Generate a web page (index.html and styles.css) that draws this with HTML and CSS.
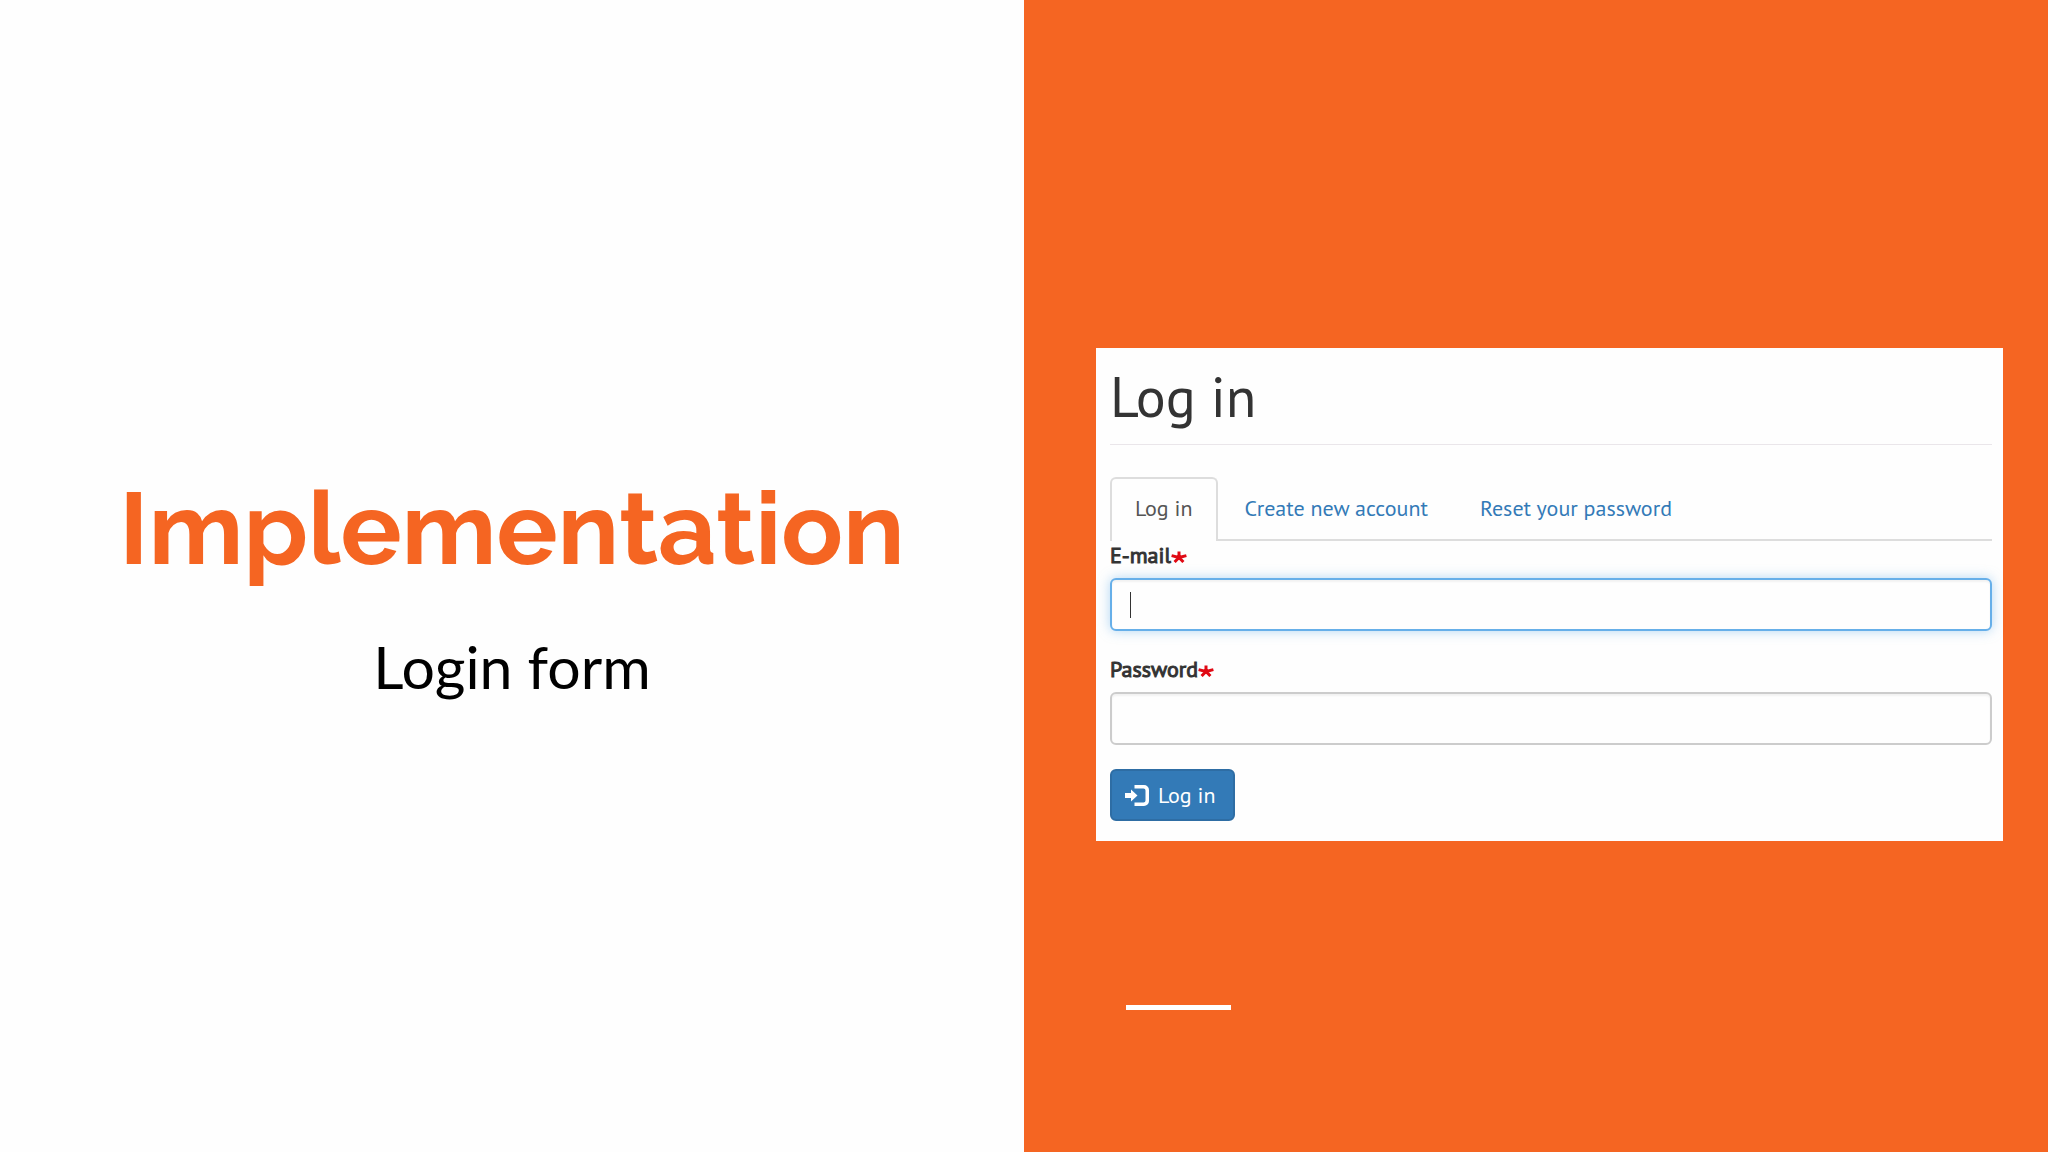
FILE: index.html
```html
<!DOCTYPE html>
<html lang="en">
  <head>
    <meta charset="utf-8" />
    <title>Implementation - Login form</title>
    <link rel="stylesheet" href="styles.css">
  </head>
  <body>
    <main class="slide">
      <section class="intro">
        <h1 class="title">Implementation</h1>
        <p class="subtitle">Login form</p>
      </section>

      <section class="demo">
        <div class="panel">
          <h2 class="page-header">Log in</h2>

          <nav class="tabs">
            <a class="tab active" href="#login">Log in</a>
            <a class="tab" href="#register">Create new account</a>
            <a class="tab" href="#reset">Reset your password</a>
          </nav>

          <form id="login">
            <div class="form-item">
              <label for="email">E-mail<svg class="required" viewBox="0 0 16 12" aria-hidden="true"><path d="M8 6.500V0.500M8 6.500L.6 4.600M8 6.500L15.400 4.600M8 6.500L3.600 11M8 6.500L12.400 11" /></svg></label>
              <div class="field">
                <input class="form-control focused" type="email" id="email" required />
                <span class="caret"></span>
              </div>
            </div>

            <div class="form-item">
              <label for="password">Password<svg class="required" viewBox="0 0 16 12" aria-hidden="true"><path d="M8 6.500V0.500M8 6.500L.6 4.600M8 6.500L15.400 4.600M8 6.500L3.600 11M8 6.500L12.400 11" /></svg></label>
              <div class="field">
                <input class="form-control" type="password" id="password" required />
              </div>
            </div>

            <button class="btn" type="submit">
              <svg class="icon" viewBox="0 0 24 21" aria-hidden="true">
                <path d="M0 8h6V4.500l6.500 6L6 16.500V13H0z" />
                <path d="M9.500 0H19a5 5 0 0 1 5 5v11a5 5 0 0 1-5 5H9.500v-3.500H18.500a2 2 0 0 0 2-2v-10a2 2 0 0 0-2-2H9.500z" />
              </svg>
              Log in
            </button>
          </form>
        </div>
        <hr class="accent" />
      </section>
    </main>
  </body>
</html>
```
FILE: styles.css
```css
* {
  box-sizing: border-box;
}
body {
  margin: 0;
  background: #fefefe;
  font-family: "PT Sans", "Noto Sans", sans-serif;
  font-size: 22px;
  line-height: 28px;
  color: #333;
}
.slide {
  display: grid;
  grid-template-columns: 1fr 1fr;
  min-height: 100vh;
}

/* left half */
.intro {
  display: flex;
  flex-direction: column;
  align-items: center;
  padding-top: 468px;
}
.title {
  margin: 0;
  font-family: Raleway, Inter, sans-serif;
  font-size: 102px;
  font-weight: 700;
  line-height: 120px;
  color: #f56522;
}
.subtitle {
  margin: 43px 0 0;
  font-family: Lato, sans-serif;
  font-size: 59px;
  line-height: 72px;
  color: #000;
}

/* right half */
.demo {
  background: #f56522;
  padding: 348px 45px 0 72px;
}
.panel {
  background: #fefefe;
  padding: 14px 11px 20px 14px;
}
.page-header {
  margin: 0 0 32px;
  padding-bottom: 14px;
  border-bottom: 1px solid #eae6ea;
  font-size: 56px;
  font-weight: 400;
  line-height: 68px;
}
.tabs {
  display: flex;
  gap: 2px;
  border-bottom: 2px solid #ddd;
}
.tab {
  margin-bottom: -2px;
  padding: 14px 23px 18px;
  border: 2px solid transparent;
  border-bottom: 0;
  border-radius: 6px 6px 0 0;
  line-height: 30px;
  color: #337ab7;
  text-decoration: none;
}
.tab.active {
  border-color: #ddd;
  background: #fefefe;
  color: #555;
}
.form-item {
  margin-bottom: 24px;
}
label {
  display: block;
  margin-bottom: 9px;
  -webkit-text-stroke: 1px #333;
}
.required {
  width: 16px;
  height: 12px;
  fill: none;
  stroke: #e00914;
  stroke-width: 3;
}
.field {
  position: relative;
}
.form-control {
  display: block;
  width: 100%;
  height: 53px;
  padding: 12px 18px;
  border: 2px solid #ccc;
  border-radius: 6px;
  background: #fefefe;
  box-shadow: inset 0 2px 2px rgba(0, 0, 0, 0.05);
  font: inherit;
  outline: none;
}
.form-control.focused {
  border-color: #66afe9;
  box-shadow: inset 0 2px 2px rgba(0, 0, 0, 0.05),
    0 0 12px rgba(102, 175, 233, 0.5);
}
.caret {
  position: absolute;
  top: 14px;
  left: 20px;
  width: 1px;
  height: 26px;
  background: #333;
}
.btn {
  display: flex;
  align-items: center;
  gap: 9px;
  height: 52px;
  padding: 0 17px 0 13px;
  border: 2px solid #2e6da4;
  border-radius: 6px;
  background: #337ab7;
  font: inherit;
  color: #fff;
  cursor: pointer;
}
.icon {
  width: 24px;
  height: 21px;
  fill: #fff;
}
.accent {
  width: 105px;
  height: 5px;
  margin: 164px 0 0 30px;
  border: 0;
  background: #fff;
}
```
